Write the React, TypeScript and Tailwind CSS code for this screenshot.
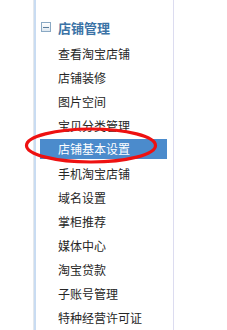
import React from "react";

const items = [
  "查看淘宝店铺",
  "店铺装修",
  "图片空间",
  "宝贝分类管理",
  "店铺基本设置",
  "手机淘宝店铺",
  "域名设置",
  "掌柜推荐",
  "媒体中心",
  "淘宝贷款",
  "子账号管理",
  "特种经营许可证",
];

export default function App() {
  return (
    <div
      className="relative w-[227px] h-[330px] bg-white overflow-hidden"
      style={{ fontFamily: '"Noto Sans CJK SC", "Noto Sans", sans-serif' }}
    >
      <div className="ml-[33px] w-[141px] h-[330px] border-l border-l-[#e4e8ec] border-r border-r-[#dcdcf0]">
        <div className="h-full border-l-2 border-l-[#c9dcf2]">
          <div className="pt-[15px] h-[39px] flex items-center pl-[5px]">
            <div className="w-[10px] h-[10px] border border-[#8aa9c4] bg-gradient-to-b from-white to-[#dfe8f0] flex items-center justify-center">
              <div className="w-[6px] h-[1px] bg-[#5a7d9c]" />
            </div>
            <span className="ml-[7px] text-[13px] leading-none font-bold text-[#3b73a6]">
              店铺管理
            </span>
          </div>
          <div className="mt-[3px]">
            {items.map((t, i) =>
              i === 4 ? (
                <div key={t} className="h-[24px] flex items-center pl-[4px]">
                  <div className="w-[127px] h-[20px] bg-[#4b8bcc] flex items-center pl-[18px] -mt-[2px]">
                    <span className="text-[12px] leading-none text-white">{t}</span>
                  </div>
                </div>
              ) : (
                <div key={t} className="h-[24px] flex items-center pl-[22px]">
                  <span className="text-[12px] leading-none text-[#262626]">{t}</span>
                </div>
              )
            )}
          </div>
        </div>
      </div>
      <svg
        className="absolute left-0 top-0 pointer-events-none"
        width="227"
        height="330"
        viewBox="0 0 227 330"
      >
        <ellipse
          cx="91"
          cy="145.5"
          rx="64.5"
          ry="16.5"
          fill="none"
          stroke="#ee1111"
          strokeWidth="3.2"
        />
      </svg>
    </div>
  );
}
